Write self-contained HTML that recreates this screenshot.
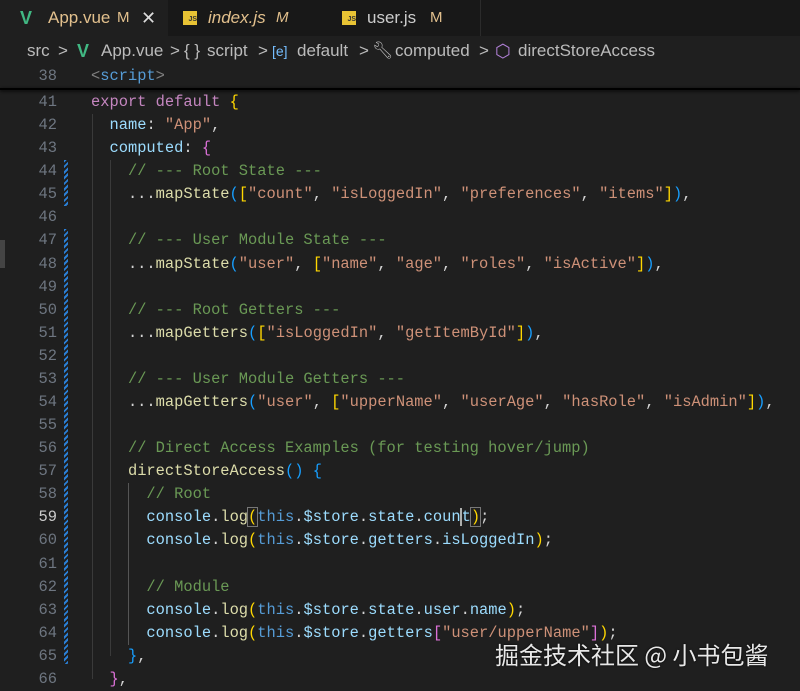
<!DOCTYPE html>
<html><head><meta charset="utf-8"><style>
body{margin:0;width:800px;height:688px;background:#1f1f1f;overflow:hidden;font-family:"Liberation Sans","Noto Sans CJK SC",sans-serif;position:relative}
.tabs{position:absolute;left:0;top:0;width:800px;height:36px;background:#181818}
.a{position:absolute;white-space:nowrap}
.tb{top:0;height:36px;line-height:36px;font-size:17px}
.cb{top:36px;height:30px;line-height:30px;font-size:17px;color:#bbb}
.code{position:absolute;left:0;top:91px;width:800px;font-family:"Liberation Mono",monospace;font-size:15.4px}
.l{height:23.08px;line-height:23.08px;white-space:pre;position:relative}
.n{position:absolute;left:0;width:57px;text-align:right;color:#6e7681}
.t{position:absolute;left:91px;color:#d4d4d4}
.k{color:#c586c0}.c{color:#6a9955}.s{color:#ce9178}.f{color:#dcdcaa}.v{color:#9cdcfe}.b{color:#569cd6}.y{color:#ffd700}.p{color:#da70d6}.u{color:#179fff}
.js{position:absolute;width:14px;height:14px;top:11px;background:#e8c334;color:#333;font-size:7px;line-height:18px;text-align:right;font-weight:bold}
.mod{position:absolute;left:64px;width:4px;background:repeating-linear-gradient(135deg,#2a7fd6 0 2px,#1f1f1f 2px 4px)}
.g{position:absolute;width:1px;background:#3a3a3a}
</style></head><body>
<div class="tabs">
<div class="a" style="left:0;top:0;width:168px;height:36px;background:#1f1f1f"></div>
<span class="a tb" style="left:20px;color:#41b883;font-weight:bold;font-size:18px">V</span>
<span class="a tb" style="left:48px;color:#e2c08d">App.vue</span>
<span class="a tb" style="left:117px;color:#e2c08d;font-size:15px">M</span>
<span class="a tb" style="left:141px;color:#ddd;font-size:18px">✕</span>
<span class="js" style="left:183px">JS</span>
<span class="a tb" style="left:208px;color:#e2c08d;font-style:italic">index.js</span>
<span class="a tb" style="left:276px;color:#e2c08d;font-style:italic;font-size:15px">M</span>
<span class="js" style="left:342px">JS</span>
<span class="a tb" style="left:367px;color:#ccc">user.js</span>
<span class="a tb" style="left:430px;color:#e2c08d;font-size:15px">M</span>
<div class="a" style="left:480px;top:0;width:1px;height:36px;background:#2b2b2b"></div>
</div>
<span class="a cb" style="left:27px">src</span>
<span class="a cb" style="left:58px">&gt;</span>
<span class="a cb" style="left:77px;color:#41b883;font-weight:bold;font-size:18px">V</span>
<span class="a cb" style="left:101px">App.vue</span>
<span class="a cb" style="left:170px">&gt;</span>
<span class="a cb" style="left:184px">{ }</span>
<span class="a cb" style="left:207px">script</span>
<span class="a cb" style="left:258px">&gt;</span>
<span class="a cb" style="left:272px;color:#75beff;font-size:14px">[e]</span>
<span class="a cb" style="left:297px">default</span>
<span class="a cb" style="left:359px">&gt;</span>
<span class="a cb" style="left:372px;font-size:17px">🔧︎</span>
<span class="a cb" style="left:395px">computed</span>
<span class="a cb" style="left:479px">&gt;</span>
<span class="a cb" style="left:495px;color:#b180d7;font-size:18px">⬡</span>
<span class="a cb" style="left:518px">directStoreAccess</span>
<div class="l" style="position:absolute;top:65px;left:0;width:800px;font-family:'Liberation Mono',monospace;font-size:15.4px;height:23px;line-height:23px"><span class="n">38</span><span class="t"><span style="color:#808080">&lt;</span><span class="b">script</span><span style="color:#808080">&gt;</span></span></div>
<div style="position:absolute;top:88px;left:0;width:800px;height:2px;background:#000;box-shadow:0 1px 3px #000"></div>
<div class="mod" style="top:160px;height:46px"></div>
<div class="mod" style="top:229px;height:435px"></div>
<div class="g" style="left:92px;top:114px;height:565px"></div>
<div class="g" style="left:110px;top:160px;height:496px"></div>
<div class="g" style="left:128px;top:483px;height:162px;background:#555"></div>
<div class="code">
<div class="l"><span class="n">41</span><span class="t"><span class="k">export default</span> <span class="y">{</span></span></div>
<div class="l"><span class="n">42</span><span class="t">  <span class="v">name</span>: <span class="s">"App"</span>,</span></div>
<div class="l"><span class="n">43</span><span class="t">  <span class="v">computed</span>: <span class="p">{</span></span></div>
<div class="l"><span class="n">44</span><span class="t">    <span class="c">// --- Root State ---</span></span></div>
<div class="l"><span class="n">45</span><span class="t">    ...<span class="f">mapState</span><span class="u">(</span><span class="y">[</span><span class="s">"count"</span>, <span class="s">"isLoggedIn"</span>, <span class="s">"preferences"</span>, <span class="s">"items"</span><span class="y">]</span><span class="u">)</span>,</span></div>
<div class="l"><span class="n">46</span></div>
<div class="l"><span class="n">47</span><span class="t">    <span class="c">// --- User Module State ---</span></span></div>
<div class="l"><span class="n">48</span><span class="t">    ...<span class="f">mapState</span><span class="u">(</span><span class="s">"user"</span>, <span class="y">[</span><span class="s">"name"</span>, <span class="s">"age"</span>, <span class="s">"roles"</span>, <span class="s">"isActive"</span><span class="y">]</span><span class="u">)</span>,</span></div>
<div class="l"><span class="n">49</span></div>
<div class="l"><span class="n">50</span><span class="t">    <span class="c">// --- Root Getters ---</span></span></div>
<div class="l"><span class="n">51</span><span class="t">    ...<span class="f">mapGetters</span><span class="u">(</span><span class="y">[</span><span class="s">"isLoggedIn"</span>, <span class="s">"getItemById"</span><span class="y">]</span><span class="u">)</span>,</span></div>
<div class="l"><span class="n">52</span></div>
<div class="l"><span class="n">53</span><span class="t">    <span class="c">// --- User Module Getters ---</span></span></div>
<div class="l"><span class="n">54</span><span class="t">    ...<span class="f">mapGetters</span><span class="u">(</span><span class="s">"user"</span>, <span class="y">[</span><span class="s">"upperName"</span>, <span class="s">"userAge"</span>, <span class="s">"hasRole"</span>, <span class="s">"isAdmin"</span><span class="y">]</span><span class="u">)</span>,</span></div>
<div class="l"><span class="n">55</span></div>
<div class="l"><span class="n">56</span><span class="t">    <span class="c">// Direct Access Examples (for testing hover/jump)</span></span></div>
<div class="l"><span class="n">57</span><span class="t">    <span class="f">directStoreAccess</span><span class="u">()</span> <span class="u">{</span></span></div>
<div class="l"><span class="n">58</span><span class="t">      <span class="c">// Root</span></span></div>
<div class="l"><span class="n" style="color:#ccc">59</span><span class="t">      <span class="v">console</span>.<span class="f">log</span><span class="y" style="outline:1px solid #777">(</span><span class="b">this</span>.<span class="v">$store</span>.<span class="v">state</span>.<span class="v">coun<span style="border-left:2px solid #aeafad;margin-left:-1px"></span>t</span><span class="y" style="outline:1px solid #777">)</span>;</span></div>
<div class="l"><span class="n">60</span><span class="t">      <span class="v">console</span>.<span class="f">log</span><span class="y">(</span><span class="b">this</span>.<span class="v">$store</span>.<span class="v">getters</span>.<span class="v">isLoggedIn</span><span class="y">)</span>;</span></div>
<div class="l"><span class="n">61</span></div>
<div class="l"><span class="n">62</span><span class="t">      <span class="c">// Module</span></span></div>
<div class="l"><span class="n">63</span><span class="t">      <span class="v">console</span>.<span class="f">log</span><span class="y">(</span><span class="b">this</span>.<span class="v">$store</span>.<span class="v">state</span>.<span class="v">user</span>.<span class="v">name</span><span class="y">)</span>;</span></div>
<div class="l"><span class="n">64</span><span class="t">      <span class="v">console</span>.<span class="f">log</span><span class="y">(</span><span class="b">this</span>.<span class="v">$store</span>.<span class="v">getters</span><span class="p">[</span><span class="s">"user/upperName"</span><span class="p">]</span><span class="y">)</span>;</span></div>
<div class="l"><span class="n">65</span><span class="t">    <span class="u">}</span>,</span></div>
<div class="l"><span class="n">66</span><span class="t">  <span class="p">}</span>,</span></div>
</div>
<div style="position:absolute;left:495px;top:636px;font-size:24px;color:#e8e8e8;font-family:'Noto Sans CJK SC',sans-serif;text-shadow:0 0 2px #000">掘金技术社区 @ 小书包酱</div>
<div style="position:absolute;left:0;top:240px;width:5px;height:28px;background:#444"></div>
</body></html>
